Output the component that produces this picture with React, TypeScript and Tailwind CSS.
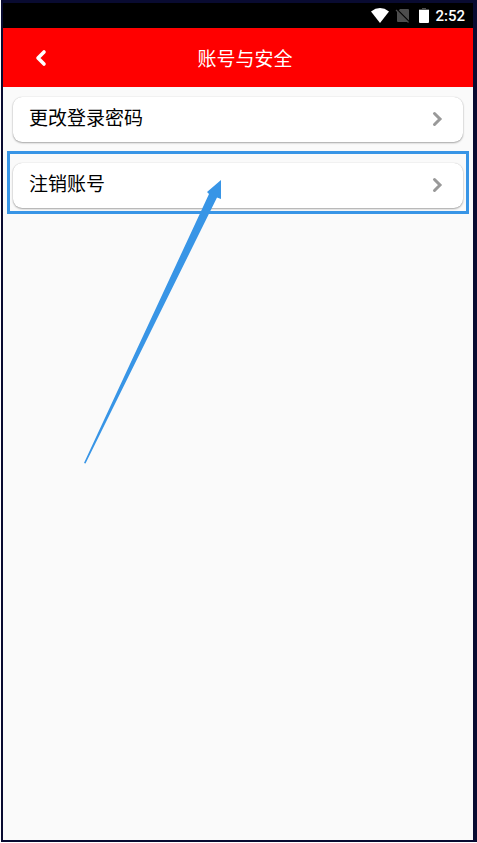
import React from 'react';

const items = [
  { label: '更改登录密码', marked: false },
  { label: '注销账号', marked: true },
];

function StatusBar() {
  return (
    <div className="flex h-[25px] items-center justify-end bg-black pr-2 text-white">
      <svg className="mr-[6px] h-[15px] w-[18px]" viewBox="0 0 18 15" fill="currentColor" aria-hidden="true">
        <path d="M0 3.4Q9-3.2 18 3.4L9 15Z" />
      </svg>
      <svg className="mr-[9px] h-[15px] w-[15px]" viewBox="0 0 15 15" aria-hidden="true">
        <path d="M5 1H13Q14 1 14 2V13Q14 14 13 14H3Q2 14 2 13V4Z" fill="#4d4d4d" />
        <path d="M2 1.4L14.5 13.9" stroke="#000" strokeWidth="1.4" />
        <path d="M1 2L13.5 14.5" stroke="#4d4d4d" strokeWidth="1.2" />
      </svg>
      <svg className="mr-[6px] h-[15px] w-[10px]" viewBox="0 0 10 15" aria-hidden="true">
        <path d="M3 0H7V1H10V3H0V1H3Z" fill="#4d4d4d" />
        <path d="M0 2H10V14Q10 15 9 15H1Q0 15 0 14Z" fill="#fff" />
      </svg>
      <time className="font-['Roboto',sans-serif] text-[15px] leading-4 font-medium">2:52</time>
    </div>
  );
}

function Marker() {
  return (
    <span className="pointer-events-none absolute -inset-x-[6px] -top-3 -bottom-[6px] z-10 border-3 border-[#3895e6]" aria-hidden="true">
      <svg className="absolute top-[26px] left-[74px] h-[285px] w-[139px]" viewBox="0 0 139 285" fill="#3895e6">
        <path d="M137 0V19L133 17.5L1.5 283.5L0 283L125 14L123 12Z" />
      </svg>
    </span>
  );
}

export default function App() {
  return (
    <div className="flex min-h-screen flex-col bg-white pb-px pl-px font-['Noto_Sans_CJK_SC',sans-serif]">
      <div className="flex flex-1 flex-col border-t-3 border-r-4 border-b-2 border-l-2 border-[#090b31] bg-[#fafafa]">
        <StatusBar />
        <header className="grid h-[59px] grid-cols-[1fr_auto_1fr] items-center bg-[#ff0000] pr-[10px] pl-6 text-white">
          <button type="button" aria-label="返回" className="flex size-7 items-center justify-center">
            <svg className="h-[18px] w-3" viewBox="0 0 12 18" fill="none" stroke="currentColor" strokeWidth="3.6" aria-hidden="true">
              <path d="M9 3L3 9L9 15" strokeLinecap="round" strokeLinejoin="round" />
            </svg>
          </button>
          <h1 className="text-[19px] leading-7 font-normal">账号与安全</h1>
        </header>
        <main className="px-[10px] pt-[10px]">
          <ul className="flex flex-col gap-[21px]">
            {items.map((item) => (
              <li key={item.label} className="relative">
                <button type="button" className="flex h-[45px] w-full items-center justify-between rounded-[9px] bg-white pr-5 pb-px pl-4 text-left text-[19px] leading-7 text-black shadow-[0_1px_2px_#00000055,0_0_1px_#00000033]">
                  <span className="pb-1">{item.label}</span>
                  <svg className="h-4 w-3" viewBox="0 0 12 16" fill="none" stroke="#999" strokeWidth="3" aria-hidden="true">
                    <path d="M3.5 2.5L9 8L3.5 13.5" strokeLinecap="round" />
                  </svg>
                </button>
                {item.marked && <Marker />}
              </li>
            ))}
          </ul>
        </main>
      </div>
    </div>
  );
}
